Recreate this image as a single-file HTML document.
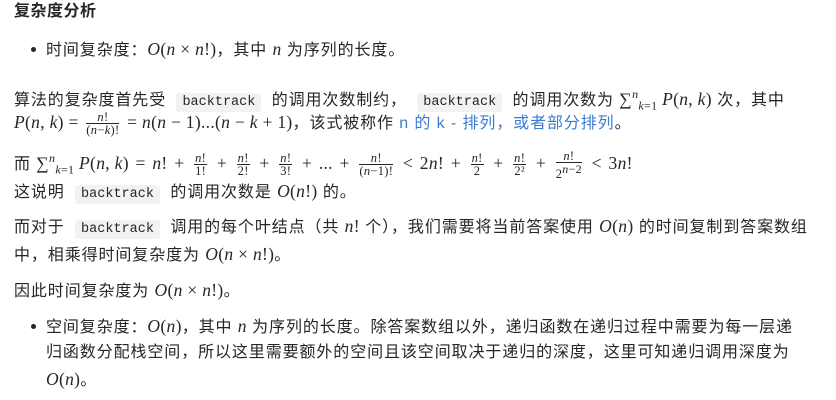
<!DOCTYPE html>
<html><head><meta charset="utf-8"><style>
body{margin:0;width:836px;height:400px;background:#fff;color:#262626;font-family:"Liberation Sans","Noto Sans CJK SC",sans-serif;font-size:16px;position:relative;overflow:hidden}
.l{position:absolute;white-space:nowrap;line-height:22px;letter-spacing:0.9px}
.m{font-family:"Liberation Serif",serif;font-size:17.5px;letter-spacing:0.3px}
.i{font-style:italic}
code{font-family:"Liberation Mono",monospace;font-size:13.5px;background:#f2f2f2;border-radius:3px;padding:2px 6px;margin:0 5px;letter-spacing:0}
.f{display:inline-block;vertical-align:middle;text-align:center;font-size:12.5px;line-height:12px;margin:0 3px}
.f span{display:block}
.f .n{border-bottom:1px solid #262626;padding:0 1px}
.b{position:absolute;width:5px;height:5px;border-radius:50%;background:#262626}
a{color:#3b7bd4;text-decoration:none}
sub,sup{font-size:12px}
.w{margin:0 2px}
</style></head><body>
<div class="l" style="left:14px;top:1px;font-weight:bold;font-size:16px;letter-spacing:0.5px">复杂度分析</div>
<div class="b" style="left:31px;top:47px"></div>
<div class="l" style="left:46px;top:38px">时间复杂度：<span class="m"><i>O</i>(<i>n</i> × <i>n</i>!)</span>，其中 <span class="m i">n</span> 为序列的长度。</div>

<div class="l" style="left:14px;top:83px">算法的复杂度首先受 <code>backtrack</code> 的调用次数制约， <code>backtrack</code> 的调用次数为 <span class="m">∑<sup><i>n</i></sup><sub><i>k</i>=1</sub> <i>P</i>(<i>n</i>, <i>k</i>)</span> 次，其中</div>
<div class="l" style="left:14px;top:111px"><span class="m"><i>P</i>(<i>n</i>, <i>k</i>) = <span class="f"><span class="n"><i>n</i>!</span><span>(<i>n</i>−<i>k</i>)!</span></span> = <i>n</i>(<i>n</i> − 1)...(<i>n</i> − <i>k</i> + 1)</span>，该式被称作 <a>n 的 k - 排列，或者部分排列</a>。</div>
<div class="l" style="left:14px;top:147px">而 <span class="m">∑<sup><i>n</i></sup><sub><i>k</i>=1</sub> <i>P</i>(<i>n</i>, <i>k</i>) <span class="w">=</span> <i>n</i>! <span class="w">+</span> <span class="f"><span class="n"><i>n</i>!</span><span>1!</span></span> <span class="w">+</span> <span class="f"><span class="n"><i>n</i>!</span><span>2!</span></span> <span class="w">+</span> <span class="f"><span class="n"><i>n</i>!</span><span>3!</span></span> <span class="w">+</span> ... <span class="w">+</span> <span class="f"><span class="n"><i>n</i>!</span><span>(<i>n</i>−1)!</span></span> <span class="w">&lt;</span> 2<i>n</i>! <span class="w">+</span> <span class="f"><span class="n"><i>n</i>!</span><span>2</span></span> <span class="w">+</span> <span class="f"><span class="n"><i>n</i>!</span><span>2²</span></span> <span class="w">+</span> <span class="f"><span class="n"><i>n</i>!</span><span>2<sup><i>n</i>−2</sup></span></span> <span class="w">&lt;</span> 3<i>n</i>!</span></div>
<div class="l" style="left:14px;top:180px">这说明 <code>backtrack</code> 的调用次数是 <span class="m"><i>O</i>(<i>n</i>!)</span> 的。</div>
<div class="l" style="left:14px;top:215px">而对于 <code>backtrack</code> 调用的每个叶结点（共 <span class="m"><i>n</i>!</span> 个），我们需要将当前答案使用 <span class="m"><i>O</i>(<i>n</i>)</span> 的时间复制到答案数组</div>
<div class="l" style="left:14px;top:243px">中，相乘得时间复杂度为 <span class="m"><i>O</i>(<i>n</i> × <i>n</i>!)</span>。</div>
<div class="l" style="left:14px;top:279px">因此时间复杂度为 <span class="m"><i>O</i>(<i>n</i> × <i>n</i>!)</span>。</div>
<div class="b" style="left:31px;top:324px"></div>
<div class="l" style="left:46px;top:315px">空间复杂度：<span class="m"><i>O</i>(<i>n</i>)</span>，其中 <span class="m i">n</span> 为序列的长度。除答案数组以外，递归函数在递归过程中需要为每一层递</div>
<div class="l" style="left:46px;top:342px">归函数分配栈空间，所以这里需要额外的空间且该空间取决于递归的深度，这里可知递归调用深度为</div>
<div class="l" style="left:46px;top:368px"><span class="m"><i>O</i>(<i>n</i>)</span>。</div>
</body></html>
